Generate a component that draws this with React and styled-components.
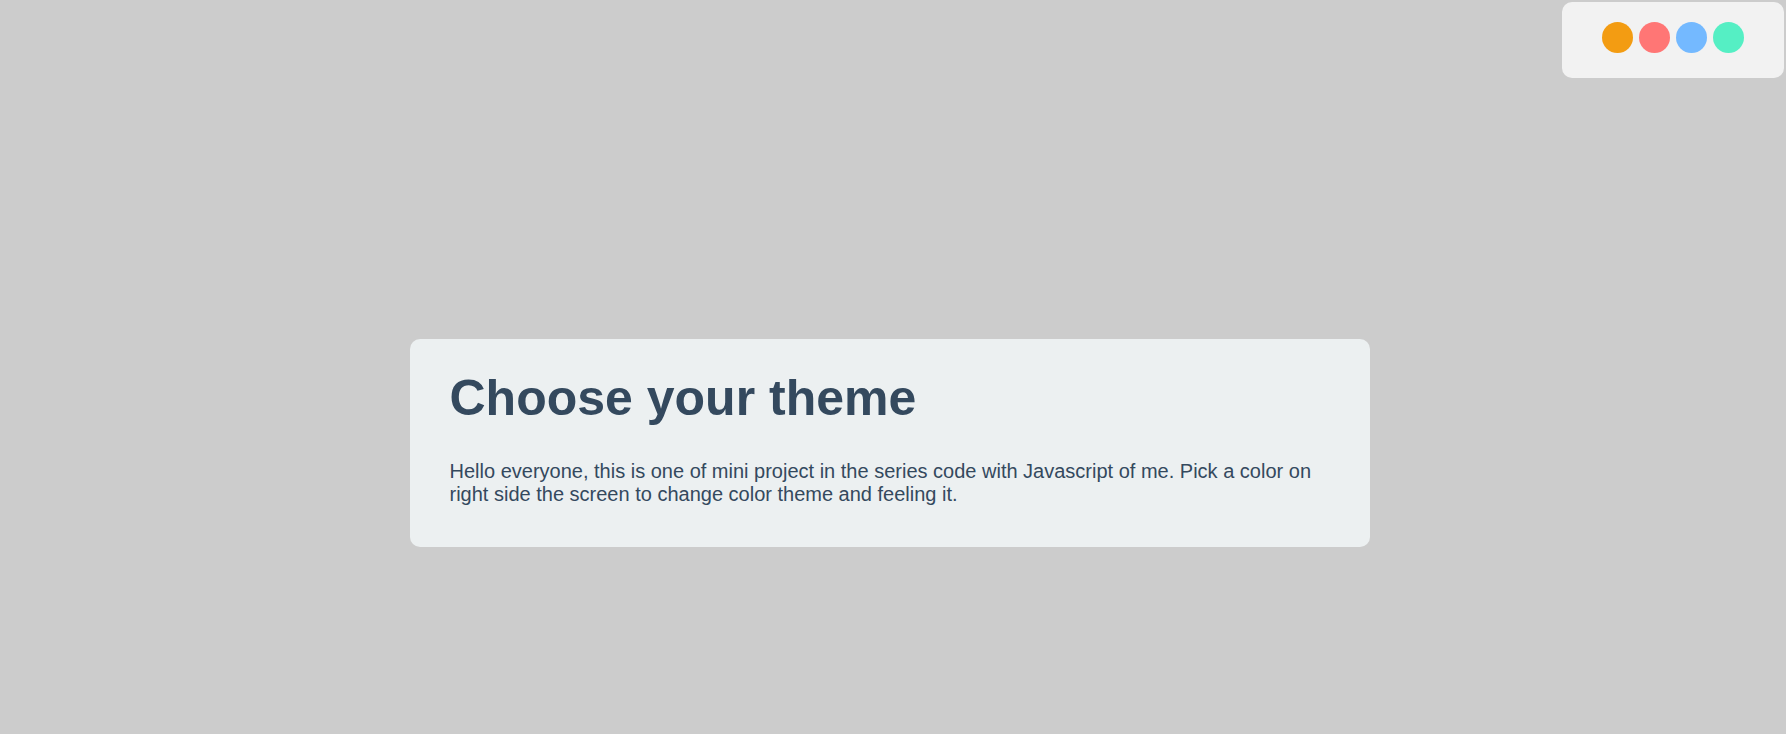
import React, { useState } from 'react';
import styled, { createGlobalStyle } from 'styled-components';

const themes = [
  { name: 'orange', color: '#f39c12' },
  { name: 'salmon', color: '#ff7675' },
  { name: 'sky', color: '#74b9ff' },
  { name: 'mint', color: '#55efc4' },
];

const GlobalStyle = createGlobalStyle`
  * {
    box-sizing: border-box;
  }

  html, body {
    margin: 0;
    padding: 0;
  }

  body {
    min-height: 100vh;
    background-color: #cccccc;
    font-family: "Liberation Sans", Arial, sans-serif;
    color: #34495e;
  }
`;

const App = () => {
  const [active, setActive] = useState(null);

  return (
    <>
      <GlobalStyle />
      <Page>
        <Card>
          <Title>Choose your theme</Title>
          <Text>
            Hello everyone, this is one of mini project in the series code with Javascript of me. Pick a color on
            right side the screen to change color theme and feeling it.
          </Text>
        </Card>
      </Page>

      <Picker>
        {themes.map((theme) => (
          <Swatch
            key={theme.name}
            $color={theme.color}
            $active={active === theme.name}
            onClick={() => setActive(theme.name)}
            aria-label={theme.name}
          />
        ))}
      </Picker>
    </>
  );
};

export default App;

const Page = styled.main`
  display: flex;
  justify-content: center;
  align-items: flex-start;
  min-height: 100vh;
  padding: 339px 7px 0 0;
`;

const Card = styled.section`
  width: 960px;
  padding: 30px 40px 41px;
  background-color: #ecf0f1;
  border-radius: 10px;
`;

const Title = styled.h1`
  margin: 0 0 33px;
  font-size: 50px;
  font-weight: bold;
  line-height: normal;
`;

const Text = styled.p`
  margin: 0;
  font-size: 20px;
  line-height: 23px;
`;

const Picker = styled.aside`
  position: fixed;
  top: 2px;
  right: 2px;
  display: flex;
  gap: 6px;
  padding: 20px 40px 25px;
  background-color: #f2f2f2;
  border-radius: 10px;
`;

const Swatch = styled.button`
  width: 31px;
  height: 31px;
  padding: 0;
  border: none;
  border-radius: 50%;
  background-color: ${(props) => props.$color};
  cursor: pointer;
  outline: ${(props) => (props.$active ? '2px solid #34495e' : 'none')};
`;
